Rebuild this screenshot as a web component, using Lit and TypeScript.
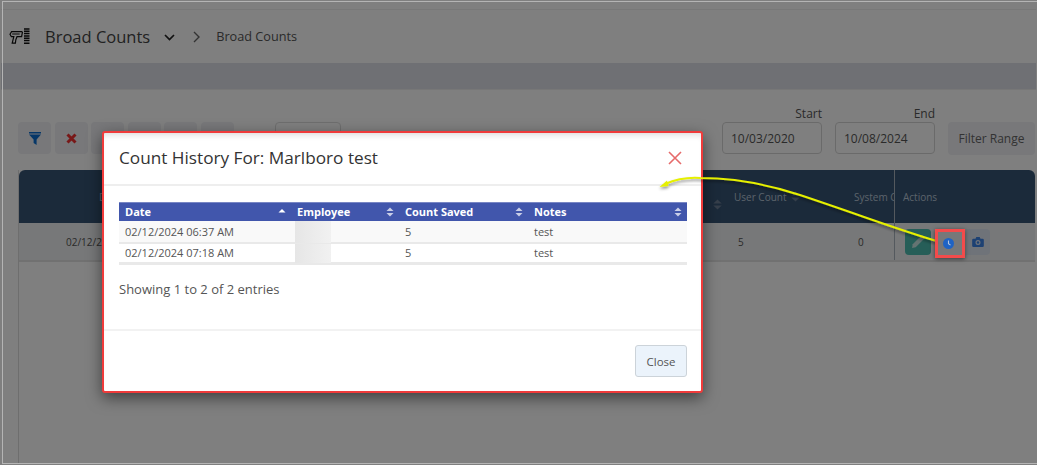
import { LitElement, html, css, svg } from "lit";
import { customElement } from "lit/decorators.js";

const sortBoth = html`<svg class="sort" width="8" height="10" viewBox="0 0 8 10"><path d="M4 0.5 7.5 4H.5z" fill="#c9cfe8"/><path d="M4 9.5 7.5 6H.5z" fill="#c9cfe8"/></svg>`;
const sortUp = html`<svg class="sort" width="8" height="10" viewBox="0 0 8 10"><path d="M4 2 7.500 5.500H.5z" fill="#fff"/></svg>`;
const sortDark = html`<svg width="9" height="11" viewBox="0 0 9 11"><path d="M4.500 .5 8.700 4.500H.3z" fill="#6c7f96"/><path d="M4.500 10.500 8.700 6.500H.3z" fill="#6c7f96"/></svg>`;

@customElement("app-root")
export class AppRoot extends LitElement {
  static styles = css`
    :host { display: block; width: 1037px; height: 465px; position: relative; overflow: hidden; background: #fff; font-family: "Open Sans", sans-serif; color: #555; }
    .page { height: 465px; box-sizing: border-box; border: 1px solid transparent; display: flex; flex-direction: column; }
    .frame { position: absolute; left: 2px; top: 1px; right: 0; bottom: 1px; border: 1px solid #b4b4b4; border-right: 0; box-sizing: border-box; }
    .topgap { height: 8px; border-bottom: 1px solid #f0f0f0; flex: none; }
    .head { height: 53px; flex: none; box-sizing: border-box; display: flex; align-items: center; padding: 0 0 1px 8px; color: #444; }
    .head svg.logo { margin-right: 15px; }
    .head .title { font-size: 16.5px; }
    .head .chev { margin: 2px 0 0 14px; }
    .head .gt { margin: 1px 16px 0 18px; }
    .head .crumb { font-size: 12.7px; color: #555; }
    .band { height: 26px; flex: none; background: #dfe1e8; border-bottom: 1px solid #eee; }
    .content { flex: 1; padding: 0 0 0 17px; display: flex; flex-direction: column; }
    .tools { height: 80px; flex: none; display: flex; align-items: flex-start; padding-top: 32px; box-sizing: border-box; }
    .tb { width: 33px; height: 32px; margin-right: 3.6px; border-radius: 4px; background: #f0f1f5; display: flex; align-items: center; justify-content: center; flex: none; }
    .picker { width: 66px; height: 32px; margin-left: 37px; box-sizing: border-box; border: 1px solid #ddd; border-radius: 4px; flex: none; }
    .spacer { flex: 1; }
    .date { width: 100px; margin-right: 13px; position: relative; flex: none; }
    .date label { position: absolute; right: 0; top: -17px; font-size: 12px; color: #555; }
    .date .inp { box-sizing: border-box; height: 32px; border: 1px solid #d5d5d5; border-radius: 4px; font-size: 12px; display: flex; align-items: center; padding-left: 8px; color: #555; }
    .range { width: 87px; height: 33px; margin-right: 1px; background: #f0f1f5; border-radius: 4px; font-size: 12px; display: flex; align-items: center; justify-content: center; color: #666; flex: none; }
    .tablewrap { flex: 1; border-left: 1px solid #ddd; border-bottom: 1px solid #fff; }
    .thead { height: 53px; background: #365474; border-radius: 6px 6px 0 0; display: flex; align-items: center; font-size: 10px; color: #b8c6d6; margin-right: 1px; }
    .row { height: 39px; background: #eef1f2; border-bottom: 2px solid #e2e2e2; display: flex; align-items: center; font-size: 10px; color: #555; margin-right: 1px; box-sizing: border-box; }
    .c { flex: none; overflow: hidden; white-space: nowrap; box-sizing: border-box; }
    .h-date { width: 694px; padding-left: 80px; }
    .h-sort { width: 21px; padding-top: 18px; }
    .h-user { width: 120px; display: flex; align-items: center; gap: 4px; }
    .h-sys { width: 40px; }
    .r-date { width: 719px; padding-left: 47px; }
    .r-user { width: 120px; }
    .r-sys { width: 36px; }
    .acts { flex: 1; height: 100%; border-left: 1px solid #a9b3bd; display: flex; align-items: center; padding-left: 8px; }
    .row .acts { padding-left: 10px; }
    .ab { width: 26px; height: 26px; border-radius: 4px; display: flex; align-items: center; justify-content: center; flex: none; }
    .ab.edit { background: #4cbcb0; }
    .ab.clock { margin-left: 3px; }
    .ab.cam { background: #dfe6f3; margin-left: 6px; width: 24px; border-radius: 0 4px 4px 0; }
    .backdrop { position: absolute; inset: 0; background: rgba(0,0,0,.5); }
    .modal { position: absolute; left: 102px; top: 131px; width: 601px; height: 262px; box-sizing: border-box; background: #fff; border: 2px solid #f03b3b; border-radius: 3px; box-shadow: 0 5px 15px rgba(0,0,0,.5), inset 0 6px 6px -4px rgba(0,0,0,.14); display: flex; flex-direction: column; color: #555; }
    .mhead { height: 53px; flex: none; box-sizing: border-box; border-bottom: 2px solid #eeeeee; padding: 0 19px 2px 15px; display: flex; align-items: center; justify-content: space-between; }
    .mhead h4 { margin: 0; font-size: 17.200px; font-weight: 400; color: #333; }
    .mbody { flex: 1; padding: 16px 14px 0 15px; font-size: 10px; }
    table { border-collapse: collapse; width: 568px; table-layout: fixed; border-bottom: 3px solid #e9e9e9; }
    th { background: #4156ac; color: #fff; font-size: 11px; font-weight: 700; text-align: left; height: 18px; padding: 0 6px; position: relative; border-top: 1px solid #7886c4; box-sizing: border-box; }
    th .sort { position: absolute; right: 5px; top: 4px; }
    td { padding: 0 6px; font-size: 11px; color: #555; box-sizing: border-box; position: relative; }
    tr.odd td { background: #f9f9f9; border-bottom: 2px solid #e9e9e9; height: 22px; }
    tr.even td { background: #fff; height: 21px; }
    .blur { position: absolute; left: 4px; top: 0; width: 36px; bottom: -1px; background: linear-gradient(90deg, #e6e6e6, #f1f1f1); }
    .info { margin-top: 15px; font-size: 13px; color: #555; }
    .mfoot { height: 62px; flex: none; box-sizing: border-box; border-top: 2px solid #f2f2f2; display: flex; justify-content: flex-end; align-items: flex-start; padding: 14px 14px 0 0; }
    .close { width: 52px; height: 32px; box-sizing: border-box; background: #ebf3fb; border: 1px solid #ccd3d9; border-radius: 3px; font-size: 11.500px; color: #555; display: flex; align-items: center; justify-content: center; }
    .callout { position: absolute; left: 0; top: 0; pointer-events: none; }
    .redbox { position: absolute; left: 935px; top: 229px; width: 30px; height: 29px; box-sizing: border-box; border: 3.5px solid #f34b4b; box-shadow: 0 1px 4px rgba(0,0,0,.5); display: flex; align-items: center; padding-left: 5px; }
  `;

  render() {
    return html`
      <div class="page">
        <div class="topgap"></div>
        <div class="head">
          <svg class="logo" width="21" height="17" viewBox="0 0 21 17" fill="none" stroke="#111" stroke-width="1.2">
            <path d="M2.600 3.600h10.200l.6.8-.8 4.300H8L6.800 11.800l-.4 3.400H3.200L4.800 8.700H2.400L1 6.200z"/>
            <path d="M3.200 6h7.500" stroke-width="1"/>
            <path d="M15 1H20.500M15 3.300H20.500M15 5.600H20.500M15 7.900H20.500M15 10.200H20.500M15 12.500H20.500M15 15.200H20.500" stroke-width="1.500"/>
          </svg>
          <span class="title">Broad Counts</span>
          <svg class="chev" width="11" height="7" viewBox="0 0 11 7" fill="none" stroke="#222" stroke-width="1.7"><path d="M1 1l4.500 4.500L10 1"/></svg>
          <svg class="gt" width="7" height="12" viewBox="0 0 7 12" fill="none" stroke="#666" stroke-width="1.4"><path d="M1 1l5 5-5 5"/></svg>
          <span class="crumb">Broad Counts</span>
        </div>
        <div class="band"></div>
        <div class="content">
          <div class="tools">
            <div class="tb"><svg width="12" height="13" viewBox="0 0 12 13"><path d="M0 0h12v1.600H0zM0 2.600h12L7.600 7.400V13L4.600 11V7.400z" fill="#0d6fd0"/></svg></div>
            <div class="tb"><svg width="11" height="11" viewBox="0 0 11 11"><path d="M1.500 1.500l8 8M9.500 1.500l-8 8" stroke="#f03030" stroke-width="3"/></svg></div>
            <div class="tb"></div><div class="tb"></div><div class="tb"></div><div class="tb"></div>
            <div class="picker"></div>
            <div class="spacer"></div>
            <div class="date"><label>Start</label><div class="inp">10/03/2020</div></div>
            <div class="date"><label>End</label><div class="inp">10/08/2024</div></div>
            <div class="range">Filter Range</div>
          </div>
          <div class="tablewrap">
            <div class="thead">
              <div class="c h-date">Date</div>
              <div class="c h-sort">${sortDark}</div>
              <div class="c h-user">User Count ${sortDark}</div>
              <div class="c h-sys">System Count</div>
              <div class="acts">Actions</div>
            </div>
            <div class="row">
              <div class="c r-date">02/12/2024</div>
              <div class="c r-user">5</div>
              <div class="c r-sys">0</div>
              <div class="acts">
                <div class="ab edit"><svg width="15" height="15" viewBox="0 0 14 14"><path d="M10.200 1l2.800 2.800-8.600 8.600L1 13l.6-3.400z" fill="#c9e9e5"/></svg></div>
                <div class="ab clock"></div>
                <div class="ab cam"><svg width="12" height="10" viewBox="0 0 14 12"><path fill-rule="evenodd" d="M1.500 2H4l1-2h4l1 2h2.500A1.500 1.500 0 0 1 14 3.500v7a1.500 1.500 0 0 1-1.500 1.500h-11A1.500 1.500 0 0 1 0 10.500v-7A1.500 1.500 0 0 1 1.500 2zM7 3.600a3 3 0 1 0 0 6 3 3 0 0 0 0-6zM7 5a1.600 1.600 0 1 1 0 3.200A1.600 1.600 0 0 1 7 5z" fill="#3b82e6"/></svg></div>
              </div>
            </div>
          </div>
        </div>
      </div>
      <div class="backdrop"></div>
      <div class="frame"></div>
      <div class="modal">
        <div class="mhead">
          <h4>Count History For: Marlboro test</h4>
          <svg width="14" height="14" viewBox="0 0 14 14" fill="none" stroke="#e66a6a" stroke-width="1.6"><path d="M1 1l12 12M13 1L1 13"/></svg>
        </div>
        <div class="mbody">
          <table>
            <colgroup><col style="width:172px"/><col style="width:108px"/><col style="width:129px"/><col style="width:159px"/></colgroup>
            <thead><tr><th>Date${sortUp}</th><th>Employee${sortBoth}</th><th>Count Saved${sortBoth}</th><th>Notes${sortBoth}</th></tr></thead>
            <tbody>
              <tr class="odd"><td>02/12/2024 06:37 AM</td><td><div class="blur"></div></td><td>5</td><td>test</td></tr>
              <tr class="even"><td>02/12/2024 07:18 AM</td><td><div class="blur"></div></td><td>5</td><td>test</td></tr>
            </tbody>
          </table>
          <div class="info">Showing 1 to 2 of 2 entries</div>
        </div>
        <div class="mfoot"><div class="close">Close</div></div>
      </div>
      <svg class="callout" width="1037" height="465" viewBox="0 0 1037 465" fill="none">
        <defs><filter id="s" x="-5%" y="-20%" width="110%" height="150%"><feDropShadow dx="0" dy="2" stdDeviation="1.5" flood-color="#000" flood-opacity=".45"/></filter></defs>
        <g filter="url(#s)">
          ${svg`<path d="M937 241C905 232 860 215 800 195C770 185 735 178 700 178C685 177 672 181 665 184" stroke="#e6f000" stroke-width="2"/>
          <path d="M659.500 187 667 180.500 668.500 186z" fill="#e6f000"/>`}
        </g>
      </svg>
      <div class="redbox">
        <svg width="11" height="11" viewBox="0 0 12 12"><circle cx="6" cy="6" r="6" fill="#1f63c4"/><path d="M6 2.600V6.300L8.200 7.800" stroke="#b4c6de" stroke-width="1.200" fill="none"/></svg>
      </div>
    `;
  }
}
